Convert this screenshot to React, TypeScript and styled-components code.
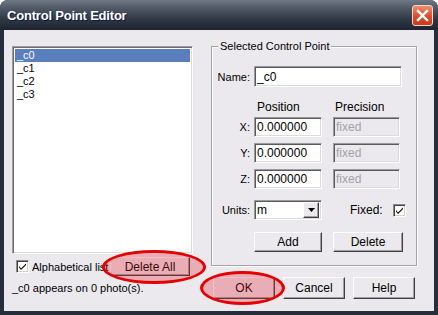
import styled, { createGlobalStyle } from "styled-components";

const GlobalStyle = createGlobalStyle`
  html, body {
    margin: 0;
    padding: 0;
    background: #ffffff;
  }
  body {
    font-family: "Liberation Sans", Arial, sans-serif;
    font-size: 11px;
    color: #000;
  }
`;

const Window = styled.div`
  position: relative;
  width: 438px;
  height: 315px;
  box-sizing: border-box;
  border-radius: 8px 8px 0 0;
  background: #272e3b;
  display: flex;
  flex-direction: column;
  overflow: hidden;
`;

const TitleBar = styled.div`
  height: 30px;
  flex: none;
  box-sizing: border-box;
  display: flex;
  align-items: center;
  justify-content: space-between;
  padding: 0 5px 0 7px;
  background: linear-gradient(#6f7884 0%, #4d5663 30%, #2f3745 65%, #1d2331 100%);
`;

const Title = styled.span`
  font: bold 13px "Liberation Sans", Arial, sans-serif;
  color: #fff;
  text-shadow: 1px 1px 0 #0d1848;
  letter-spacing: -0.2px;
`;

const CloseButton = styled.div`
  width: 19px;
  height: 19px;
  border: 1px solid #f3d6cc;
  border-radius: 3px;
  background: linear-gradient(#ee8d6f, #dc4b2c 55%, #c73a1d);
  display: flex;
  align-items: center;
  justify-content: center;
`;

const Body = styled.div`
  flex: 1;
  margin: 0 4px 4px 4px;
  background: #ece9ee;
  display: flex;
  padding: 16px 0 0 8px;
  gap: 18px;
`;

const LeftColumn = styled.div`
  width: 181px;
  display: flex;
  flex-direction: column;
`;

const RightColumn = styled.div`
  width: 206px;
  display: flex;
  flex-direction: column;
`;

const ListBox = styled.div`
  height: 208px;
  box-sizing: border-box;
  background: #fff;
  border-top: 1px solid #9d9d9d;
  border-left: 1px solid #9d9d9d;
  border-right: 1px solid #fff;
  border-bottom: 1px solid #fff;
  box-shadow: inset 1px 1px 0 #6b6b6b, inset -1px -1px 0 #dcdcdc;
  padding: 2px;
`;

const ListItem = styled.div<{ $selected?: boolean }>`
  height: 13px;
  line-height: 13px;
  padding-left: 2px;
  background: ${(p) => (p.$selected ? "#5b7ebd" : "transparent")};
  color: ${(p) => (p.$selected ? "#fff" : "#000")};
`;

const CheckRow = styled.div`
  margin-top: 3px;
  height: 19px;
  display: flex;
  align-items: center;
  padding-left: 4px;
`;

const CheckBox = styled.div`
  width: 13px;
  height: 13px;
  flex: none;
  box-sizing: border-box;
  background: #fff;
  border-top: 1px solid #8c8c8c;
  border-left: 1px solid #8c8c8c;
  border-right: 1px solid #fff;
  border-bottom: 1px solid #fff;
  box-shadow: inset 1px 1px 0 #404040, inset -1px -1px 0 #d4d0c8;
  display: flex;
  align-items: center;
  justify-content: center;
`;

const CheckLabel = styled.span`
  margin-left: 3px;
  width: 78px;
  overflow: hidden;
  white-space: nowrap;
`;

const Button = styled.div<{ $width: number; $height?: number }>`
  width: ${(p) => p.$width}px;
  height: ${(p) => p.$height ?? 20}px;
  box-sizing: border-box;
  flex: none;
  display: flex;
  align-items: center;
  justify-content: center;
  background: #ece9ee;
  border-top: 1px solid #fff;
  border-left: 1px solid #fff;
  border-right: 1px solid #404040;
  border-bottom: 1px solid #404040;
  box-shadow: inset -1px -1px 0 #a0a0a0;
  font-size: 12px;
`;

const Status = styled.div`
  margin-top: 6px;
  line-height: 13px;
  white-space: nowrap;
`;

const GroupBox = styled.fieldset`
  margin: -6px 0 0 0;
  padding: 0;
  height: 226px;
  box-sizing: border-box;
  border: 1px solid #a5a3a8;
  box-shadow: inset 1px 1px 0 #fff, 1px 1px 0 #fff;
`;

const Legend = styled.legend`
  margin-left: 6px;
  padding: 0 2px;
  line-height: 12px;
  font-size: 11px;
  background: #ece9ee;
`;

const GroupBody = styled.div`
  padding-top: 14px;
`;

const FieldRow = styled.div<{ $top: number; $height?: number }>`
  display: flex;
  align-items: center;
  margin-top: ${(p) => p.$top}px;
  height: ${(p) => p.$height ?? 20}px;
`;

const FieldLabel = styled.span`
  width: 38px;
  margin-right: 4px;
  text-align: right;
  flex: none;
`;

const HeaderCell = styled.span<{ $width: number; $indent: number }>`
  width: ${(p) => p.$width}px;
  padding-left: ${(p) => p.$indent}px;
  box-sizing: border-box;
  font-size: 12px;
`;

const TextInput = styled.div<{ $width: number; $height?: number; $disabled?: boolean }>`
  width: ${(p) => p.$width}px;
  height: ${(p) => p.$height ?? 20}px;
  box-sizing: border-box;
  flex: none;
  display: flex;
  align-items: center;
  padding-left: 2px;
  background: ${(p) => (p.$disabled ? "#ece9ee" : "#fff")};
  color: ${(p) => (p.$disabled ? "#a3a1a6" : "#000")};
  border-top: 1px solid #9b9b9b;
  border-left: 1px solid #9b9b9b;
  border-right: 1px solid #fff;
  border-bottom: 1px solid #fff;
  box-shadow: inset 1px 1px 0 #5a5a5a, inset -1px -1px 0 #dcdcdc;
  font-size: 12px;
`;

const Gap = styled.span<{ $w: number }>`
  width: ${(p) => p.$w}px;
  flex: none;
`;

const Select = styled(TextInput)`
  justify-content: space-between;
  padding-right: 2px;
`;

const DropArrow = styled.div`
  width: 16px;
  height: 16px;
  box-sizing: border-box;
  background: #ece9ee;
  border-top: 1px solid #fff;
  border-left: 1px solid #fff;
  border-right: 1px solid #404040;
  border-bottom: 1px solid #404040;
  box-shadow: inset -1px -1px 0 #a0a0a0;
  display: flex;
  align-items: center;
  justify-content: center;
`;

const FixedLabel = styled.span`
  margin-left: 28px;
  margin-right: 10px;
  font-size: 12px;
`;

const DialogButtons = styled.div`
  margin-top: 11px;
  display: flex;
  justify-content: flex-end;
  gap: 8px;
  padding-right: 2px;
`;

const Highlight = styled.div<{ $x: number; $y: number; $w: number; $h: number }>`
  position: absolute;
  left: ${(p) => p.$x}px;
  top: ${(p) => p.$y}px;
  width: ${(p) => p.$w}px;
  height: ${(p) => p.$h}px;
  box-sizing: border-box;
  border: 3px solid #e60000;
  border-radius: 50%;
  background: rgba(225, 20, 35, 0.28);
  pointer-events: none;
`;

const Check = () => (
  <svg width="9" height="9" viewBox="0 0 9 9">
    <path d="M1 4 L3 6.5 L8 1.5 L8 3 L3 8 L1 5.5 Z" fill="#000" />
  </svg>
);

const coords = ["X", "Y", "Z"];

export default function App() {
  return (
    <>
      <GlobalStyle />
      <Window>
        <TitleBar>
          <Title>Control Point Editor</Title>
          <CloseButton>
            <svg width="13" height="13" viewBox="0 0 13 13">
              <path d="M2 2 L11 11 M11 2 L2 11" stroke="#fff" strokeWidth="2.4" strokeLinecap="square" />
            </svg>
          </CloseButton>
        </TitleBar>
        <Body>
          <LeftColumn>
            <ListBox>
              <ListItem $selected>_c0</ListItem>
              <ListItem>_c1</ListItem>
              <ListItem>_c2</ListItem>
              <ListItem>_c3</ListItem>
            </ListBox>
            <CheckRow>
              <CheckBox>
                <Check />
              </CheckBox>
              <CheckLabel>Alphabetical list</CheckLabel>
              <Button $width={80} $height={19}>
                Delete All
              </Button>
            </CheckRow>
            <Status>_c0 appears on 0 photo(s).</Status>
          </LeftColumn>
          <RightColumn>
            <GroupBox>
              <Legend>Selected Control Point</Legend>
              <GroupBody>
                <FieldRow $top={0} $height={21}>
                  <FieldLabel>Name:</FieldLabel>
                  <TextInput $width={148} $height={21}>
                    _c0
                  </TextInput>
                </FieldRow>
                <FieldRow $top={13} $height={13}>
                  <Gap $w={42} />
                  <HeaderCell $width={79} $indent={3}>
                    Position
                  </HeaderCell>
                  <HeaderCell $width={67} $indent={2}>
                    Precision
                  </HeaderCell>
                </FieldRow>
                {coords.map((c, i) => (
                  <FieldRow key={c} $top={i === 0 ? 4 : 6}>
                    <FieldLabel>{c}:</FieldLabel>
                    <TextInput $width={68}>0.000000</TextInput>
                    <Gap $w={11} />
                    <TextInput $width={67} $disabled>
                      fixed
                    </TextInput>
                  </FieldRow>
                ))}
                <FieldRow $top={11}>
                  <FieldLabel>Units:</FieldLabel>
                  <Select $width={68}>
                    m
                    <DropArrow>
                      <svg width="7" height="4" viewBox="0 0 7 4">
                        <path d="M0 0 H7 L3.5 4 Z" fill="#000" />
                      </svg>
                    </DropArrow>
                  </Select>
                  <FixedLabel>Fixed:</FixedLabel>
                  <CheckBox>
                    <Check />
                  </CheckBox>
                </FieldRow>
                <FieldRow $top={12}>
                  <Gap $w={42} />
                  <Button $width={68}>Add</Button>
                  <Gap $w={11} />
                  <Button $width={70}>Delete</Button>
                </FieldRow>
              </GroupBody>
            </GroupBox>
            <DialogButtons>
              <Button $width={62} $height={22}>
                OK
              </Button>
              <Button $width={62} $height={22}>
                Cancel
              </Button>
              <Button $width={62} $height={22}>
                Help
              </Button>
            </DialogButtons>
          </RightColumn>
        </Body>
        <Highlight $x={102} $y={250} $w={104} $h={34} />
        <Highlight $x={200} $y={271} $w={85} $h={34} />
      </Window>
    </>
  );
}
